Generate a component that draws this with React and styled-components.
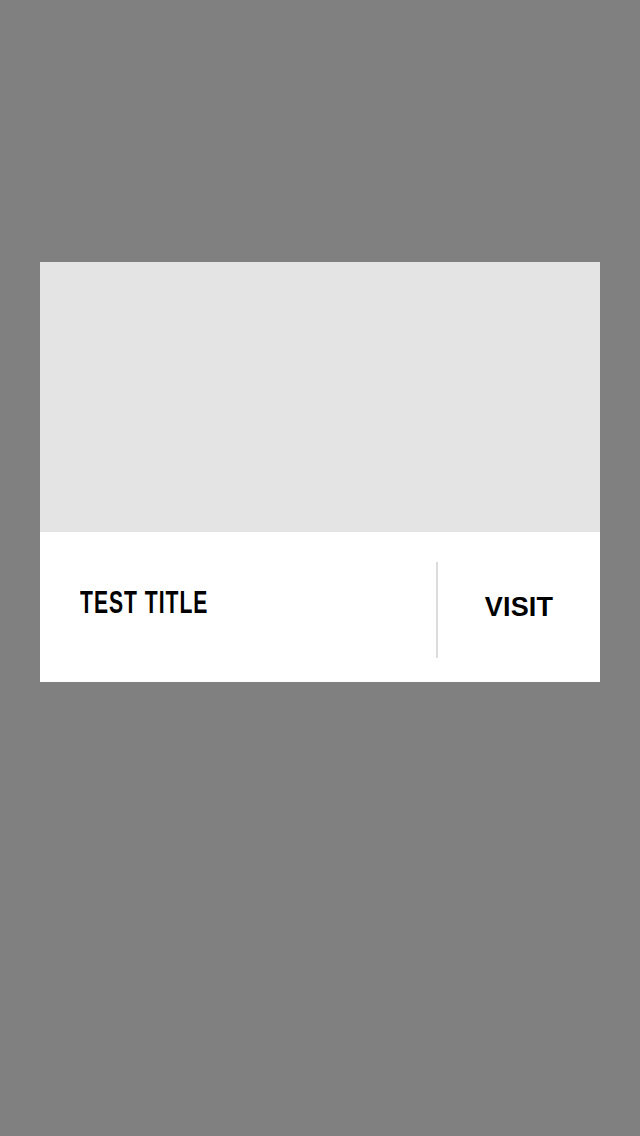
import React from 'react';
import styled, { createGlobalStyle } from 'styled-components';

const GlobalStyle = createGlobalStyle`
  html, body {
    margin: 0;
    padding: 0;
    background: #808080;
  }
`;

const Page = styled.div`
  width: 640px;
  height: 1136px;
  padding: 262px 40px 0;
  box-sizing: border-box;
  background: #808080;
`;

const Card = styled.div`
  display: flex;
  flex-direction: column;
  background: #fff;
`;

const Cover = styled.div`
  height: 270px;
  background: #e4e4e4;
`;

const Footer = styled.div`
  display: flex;
  align-items: stretch;
  height: 150px;
`;

const TitleCell = styled.div`
  flex: 1;
  display: flex;
  align-items: center;
  padding: 0 0 10px 40px;
`;

// no condensed face installed, so squeeze a regular bold one
const Title = styled.h2`
  margin: 0;
  font-family: 'Liberation Sans', Arial, sans-serif;
  font-weight: bold;
  font-size: 32px;
  letter-spacing: 1.5px;
  color: #000;
  transform: scaleX(0.66);
  transform-origin: left center;
`;

const Divider = styled.div`
  width: 2px;
  margin: 30px 0 24px;
  background: #dcdcdc;
`;

const Visit = styled.a`
  width: 162px;
  display: flex;
  align-items: center;
  justify-content: center;
  font-family: 'Liberation Sans', Arial, sans-serif;
  font-weight: bold;
  font-size: 27px;
  letter-spacing: 0.2px;
  color: #000;
  text-decoration: none;
  cursor: pointer;
`;

export default function App() {
  return (
    <>
      <GlobalStyle />
      <Page>
        <Card>
          <Cover />
          <Footer>
            <TitleCell>
              <Title>TEST TITLE</Title>
            </TitleCell>
            <Divider />
            <Visit>VISIT</Visit>
          </Footer>
        </Card>
      </Page>
    </>
  );
}
